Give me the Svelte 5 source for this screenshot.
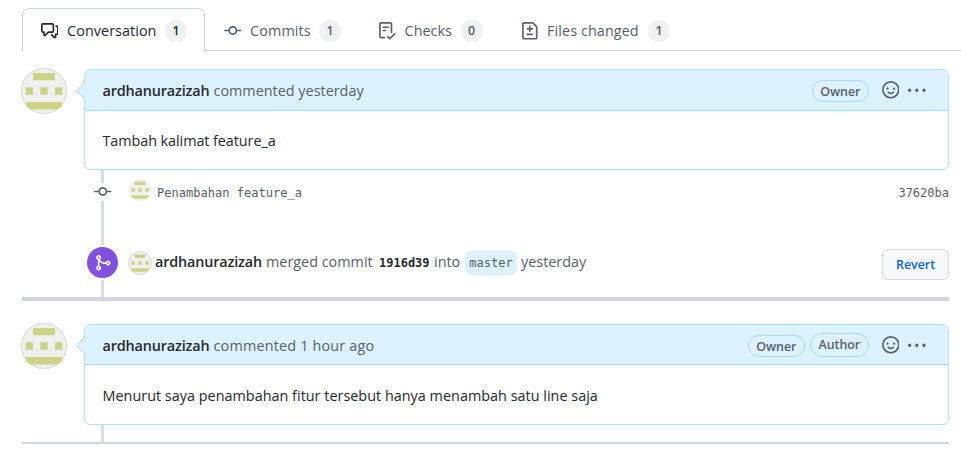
<script>
  const icons = {
    discussion: 'M1.5 2.75a.25.25 0 01.25-.25h8.5a.25.25 0 01.25.25v5.5a.25.25 0 01-.25.25h-3.5a.75.75 0 00-.53.22L3.5 11.44V9.25a.75.75 0 00-.75-.75h-1a.25.25 0 01-.25-.25v-5.5zM1.75 1A1.75 1.75 0 000 2.75v5.5C0 9.216.784 10 1.75 10H2v1.543a1.457 1.457 0 002.487 1.03L7.061 10h3.189A1.75 1.75 0 0012 8.25v-5.5A1.75 1.75 0 0010.25 1h-8.5zM14.5 4.75a.25.25 0 00-.25-.25h-.5a.75.75 0 110-1.5h.5c.966 0 1.75.784 1.75 1.75v5.5A1.75 1.75 0 0114.25 12H14v1.543a1.457 1.457 0 01-2.487 1.03L9.22 12.28a.75.75 0 111.06-1.06l2.22 2.22v-2.19a.75.75 0 01.75-.75h1a.25.25 0 00.25-.25v-5.5z',
    commit: 'M10.5 7.75a2.5 2.5 0 11-5 0 2.5 2.5 0 015 0zm1.43.75a4.002 4.002 0 01-7.86 0H.75a.75.75 0 110-1.5h3.32a4.001 4.001 0 017.86 0h3.32a.75.75 0 110 1.5h-3.32z',
    checklist: 'M2.5 1.75a.25.25 0 01.25-.25h8.5a.25.25 0 01.25.25v7.736a.75.75 0 101.5 0V1.75A1.75 1.75 0 0011.25 0h-8.5A1.75 1.75 0 001 1.75v11.5c0 .966.784 1.75 1.75 1.75h3.17a.75.75 0 000-1.5H2.75a.25.25 0 01-.25-.25V1.75zM4.75 4a.75.75 0 000 1.5h4.5a.75.75 0 000-1.5h-4.5zM4 7.75A.75.75 0 014.75 7h2a.75.75 0 010 1.5h-2A.75.75 0 014 7.75zm11.774 3.537a.75.75 0 00-1.048-1.074L10.7 14.145 9.281 12.72a.75.75 0 00-1.062 1.058l1.943 1.95a.75.75 0 001.055.008l4.557-4.45z',
    diff: 'M2.75 1.5a.25.25 0 00-.25.25v12.5c0 .138.112.25.25.25h10.5a.25.25 0 00.25-.25V4.664a.25.25 0 00-.073-.177l-2.914-2.914a.25.25 0 00-.177-.073H2.75zM1 1.75C1 .784 1.784 0 2.75 0h7.586c.464 0 .909.184 1.237.513l2.914 2.914c.329.328.513.773.513 1.237v9.586A1.75 1.75 0 0113.25 16H2.75A1.75 1.75 0 011 14.25V1.75zm7 1.5a.75.75 0 01.75.75v1.5h1.5a.75.75 0 010 1.5h-1.5v1.5a.75.75 0 01-1.5 0V7h-1.5a.75.75 0 010-1.5h1.5V4A.75.75 0 018 3.25zm-3 8a.75.75 0 01.75-.75h4.5a.75.75 0 010 1.5h-4.5a.75.75 0 01-.75-.75z',
    smiley: 'M1.5 8a6.5 6.5 0 1113 0 6.5 6.5 0 01-13 0zM8 0a8 8 0 100 16A8 8 0 008 0zM5 8a1 1 0 100-2 1 1 0 000 2zm7-1a1 1 0 11-2 0 1 1 0 012 0zM5.32 9.636a.75.75 0 011.038.175l.007.009c.103.118.22.222.35.31.264.178.683.37 1.285.37.602 0 1.02-.192 1.285-.371.13-.088.247-.192.35-.31l.007-.008a.75.75 0 111.222.87c-.2.26-.43.48-.73.68-.63.418-1.37.638-2.127.629-.946 0-1.652-.308-2.126-.63a3.331 3.331 0 01-.733-.683.75.75 0 01.183-1.044z',
    kebab: 'M1.5 9a1.5 1.5 0 100-3 1.5 1.5 0 000 3zM8 9a1.5 1.5 0 100-3 1.5 1.5 0 000 3zM14.5 9a1.5 1.5 0 100-3 1.5 1.5 0 000 3z',
    merge: 'M5 3.254V3.25v.005a.75.75 0 110-.005v.004zm.45 1.9a2.25 2.25 0 10-1.95.218v5.256a2.25 2.25 0 101.5 0V7.123A5.735 5.735 0 009.25 9h1.378a2.251 2.251 0 100-1.5H9.25a4.25 4.25 0 01-3.8-2.346zM12.75 9a.75.75 0 100-1.5.75.75 0 000 1.5zm-8.5 4.5a.75.75 0 100-1.5.75.75 0 000 1.5z'
  };
  const tabs = [
    { id: 'conversation', label: 'Conversation', icon: 'discussion', count: 1, active: true },
    { id: 'commits', label: 'Commits', icon: 'commit', count: 1 },
    { id: 'checks', label: 'Checks', icon: 'checklist', count: 0 },
    { id: 'files', label: 'Files changed', icon: 'diff', count: 1 }
  ];
</script>

{#snippet icon(name, size = 17.6)}
  <svg class="icon" width={size} height={size} viewBox="0 0 16 16" fill="currentColor" fill-rule="evenodd"><path d={icons[name]} /></svg>
{/snippet}

{#snippet avatar(kind)}
  <svg class="avatar {kind}" viewBox="0 0 46 46">
    <g fill="#cdd384">
      <path d="M12 5h22v7.3H12zM4.7 19.3H12v7.4H4.7zM19.3 19.3h7.4v7.4h-7.4zM34 19.3h7.3v7.4H34zM4.7 34h36.6v7.4H4.7z" />
    </g>
  </svg>
{/snippet}

{#snippet comment(extra, time, timeClass, roles, body, bodyClass)}
  <section class="comment {extra}">
    {@render avatar('large')}
    <article class="card">
      <svg class="caret" width="9" height="18" viewBox="0 0 9 18"><path d="M9 0L.7 8.7 9 17.5" fill="#dcf2fe" stroke="#acdaff" /></svg>
      <header>
        <p><strong class="user">ardhanurazizah</strong><span class={timeClass}>commented {time}</span></p>
        <div class="tools">
          {#each roles as role}<span class="role {role.toLowerCase()}">{role}</span>{/each}
          <span class="smile">{@render icon('smiley')}</span>
          <span class="dots">{@render icon('kebab')}</span>
        </div>
      </header>
      <div class="body"><span class={bodyClass}>{body}</span></div>
    </article>
  </section>
{/snippet}

<main>
  <nav>
    {#each tabs as tab}
      <div class="tab {tab.id}" class:active={tab.active}>
        {@render icon(tab.icon)}
        <span class="label">{tab.label}</span>
        <span class="count">{tab.count}</span>
      </div>
    {/each}
  </nav>

  {@render comment('first', 'yesterday', 't1', ['Owner'], 'Tambah kalimat feature_a', 'b1')}

  <div class="timeline">
    <div class="rail r1"></div>
    <div class="commit">
      <span class="node">{@render icon('commit')}</span>
      {@render avatar('small')}
      <code class="message">Penambahan feature_a</code>
      <code class="hash">37620ba</code>
    </div>
    <div class="rail r2"></div>
    <div class="merge">
      <span class="badge">{@render icon('merge')}</span>
      {@render avatar('ring')}
      <strong class="user">ardhanurazizah</strong>
      <span class="w1">merged commit</span>
      <code class="sha">1916d39</code>
      <span class="w2">into</span>
      <code class="branch">master</code>
      <span class="w3">yesterday</span>
      <button>Revert</button>
    </div>
    <div class="rail r3"></div>
  </div>
  <div class="divider"></div>

  {@render comment('second', '1 hour ago', 't2', ['Owner', 'Author'], 'Menurut saya penambahan fitur tersebut hanya menambah satu line saja', 'b2')}
  <div class="rail r4"></div>
  <div class="divider thin"></div>
</main>

<style>
  :global(body) { margin: 0; background: #fff; }
  main { width: 961px; height: 461px; overflow: hidden; box-sizing: border-box; padding-top: 8px; color: #24292e; font: 14.4px/22px 'Open Sans', 'Noto Sans', sans-serif; white-space: nowrap; }
  .icon { display: block; flex: none; }
  nav { display: flex; height: 44px; margin-left: 22px; color: #586069; background: linear-gradient(#d1d5da, #d1d5da) 0 42px / 100% 1px no-repeat; }
  .tab { display: flex; align-items: center; box-sizing: border-box; height: 44px; padding: 2px 0 0 18.5px; }
  .tab.active { width: 183px; border: 1px solid #d1d7df; border-bottom: 0; border-radius: 7px 7px 0 0; background: #fff; color: #24292e; padding: 1px 0 0 17.5px; }
  .label { margin-left: 9px; }
  .conversation .label { width: 98px; letter-spacing: .05px; }
  .commits { width: 154.5px; }
  .commits .label { width: 69px; letter-spacing: .08px; }
  .checks { width: 142.5px; }
  .checks .label { width: 56px; }
  .files .label { width: 101px; letter-spacing: .08px; }
  .count { flex: none; width: 22px; height: 22px; border-radius: 11px; background: #eff1f3; text-align: center; font-size: 12.4px; font-weight: 600; }

  .comment { display: flex; align-items: flex-start; padding: 16px 12px 0 21px; }
  .avatar { display: block; flex: none; box-sizing: border-box; border-radius: 50%; background: #f0f0f0; overflow: hidden; }
  .large { width: 46px; height: 46px; box-shadow: inset 0 0 0 1px #dcdcdc; }
  .card { position: relative; flex: 1; box-sizing: border-box; height: 101px; margin: 1px 0 0 17px; border: 1px solid #b6dfff; border-radius: 6px; }
  .caret { position: absolute; left: -9px; top: 12px; }
  header { display: flex; justify-content: space-between; box-sizing: border-box; height: 41px; padding: 0 22px 0 17.5px; border-bottom: 1px solid #a8d8ff; border-radius: 5px 5px 0 0; background: #dcf2fe; color: #586069; }
  .second header { height: 40px; }
  p { display: flex; margin: 10px 0 0; }
  .user { display: block; flex: none; width: 111px; font-weight: 600; color: #24292e; letter-spacing: -.15px; }
  .t2 { letter-spacing: .18px; }
  .b1 { letter-spacing: -.07px; }
  .b2 { letter-spacing: .015px; }
  .tools { display: flex; }
  .role { box-sizing: border-box; height: 22px; margin-top: 10px; padding: 0; border: 1px solid #a8d8ff; border-radius: 11px; text-align: center; font-size: 12.4px; line-height: 21px; font-weight: 600; }
  .owner { width: 57px; }
  .author { width: 59px; margin: 8px 0 0 5px; height: 24px; line-height: 22px; border-radius: 12px; }
  .smile { margin: 11px 0 0 13px; }
  .dots { margin: 12px 0 0 9px; }
  .body { padding: 19px 0 0 17.5px; }
  .second .body { padding-top: 20px; }

  .rail { width: 3px; margin-left: 101px; background: #d9dde4; }
  .r1 { height: 13px; }
  .r2 { height: 44px; }
  .r3 { height: 17px; }
  .r4 { height: 17px; }
  .commit { display: flex; height: 18px; align-items: center; padding: 0 12px 0 94px; color: #586069; }
  .small { width: 22px; height: 22px; margin: -4px 6px 0 17.4px; }
  .message, .hash { font: 12px/18px 'DejaVu Sans Mono', monospace; margin-top: 1px; }
  .message { letter-spacing: .03px; }
  .hash { margin-left: auto; }
  .merge { display: flex; height: 35px; align-items: center; padding: 0 12px 0 87px; color: #586069; }
  .merge .user, .w1, .w2, .w3 { margin-top: -2px; }
  .badge { display: grid; place-items: center; width: 31px; height: 31px; border-radius: 50%; background: #8250df; color: #fff; }
  .ring { width: 24px; height: 24px; margin: 0 3px 0 10px; border: 1px solid #dcdcdc; }
  .w1 { width: 113px; }
  .sha { width: 55px; font: bold 12px/18px 'DejaVu Sans Mono', monospace; color: #24292e; }
  .w2 { width: 31px; }
  .branch { width: 52px; height: 24px; border-radius: 6px; background: #dcf2fe; font: 12px/25px 'DejaVu Sans Mono', monospace; text-align: center; }
  .w3 { margin-left: 4px; }
  button { box-sizing: border-box; width: 67px; height: 31px; margin: 4px 0 0 auto; padding: 0; border: 1px solid #d7dade; border-radius: 6px; background: #f6f8fa; color: #0366d6; font: 600 12.4px/28px 'Open Sans', sans-serif; }
  .divider { height: 4px; margin: 0 12px 0 22px; background: #d1d7e0; }
  .second { padding-top: 22px; }
  .thin { height: 2px; }
</style>
